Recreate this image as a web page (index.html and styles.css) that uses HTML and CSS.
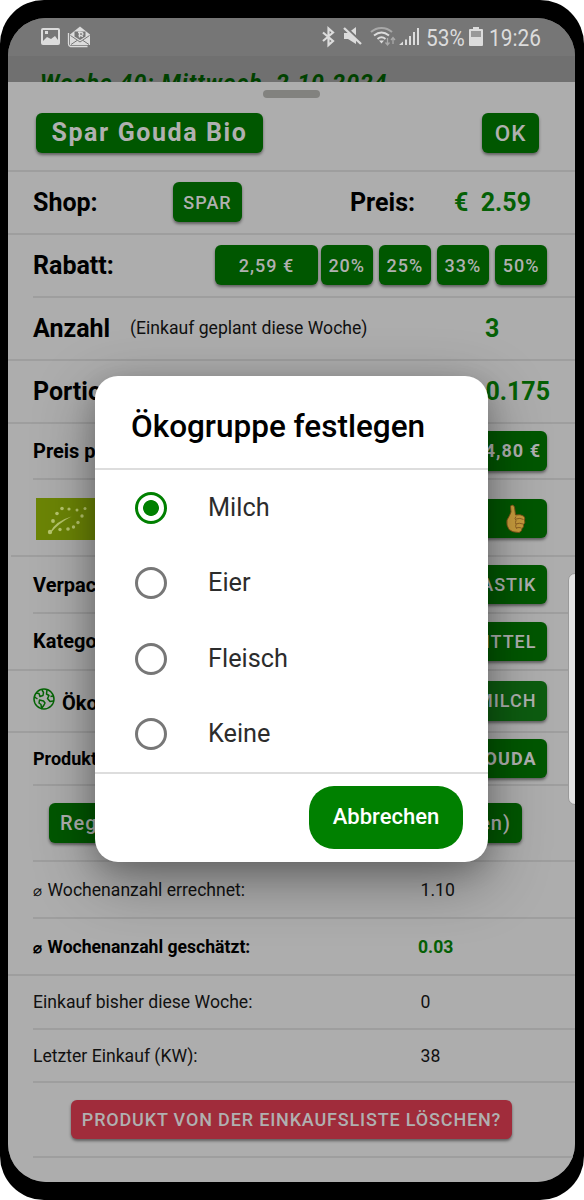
FILE: index.html
```html
<!DOCTYPE html>
<html lang="de">
<head>
<meta charset="utf-8">
<title>Spar Gouda Bio</title>
<link rel="stylesheet" href="styles.css">
</head>
<body>
<div class="phone">
  <div class="screen">
    <header class="status">
      <svg class="status-left" width="52" height="24" viewBox="0 0 52 24">
        <path fill="#dcdcdc" fill-rule="evenodd" d="M2 2h15q2 0 2 2v13q0 2-2 2H2q-2 0-2-2V4q0-2 2-2zM2 4v11l4-4 4 2 4-3 3 4V4zM4 5h3v3H4z"/>
        <path fill="#dcdcdc" d="M29 8.500l10-8 10 8V19H29z"/>
        <path d="M33.500 5.500h11v5L39 14l-5.500-3.500z" fill="#777"/>
        <path d="M29.500 9.500l9.500 6.500 9.500-6.500M30 18.500l6-4M48 18.500l-6-4" fill="none" stroke="#777" stroke-width="1"/>
        <path d="M37 6.500h3q2 0 2 1.500t-2 1.500h-2.500M39.500 9.500q2 0 2 1.500M38.500 5.500v6" fill="none" stroke="#dcdcdc" stroke-width="1.300"/>
        <path d="M27.500 7v11q0 2 2 2.500h17" fill="none" stroke="#dcdcdc" stroke-width="1.300"/>
      </svg>
      <div class="status-right">
        <svg width="130" height="24" viewBox="0 0 130 24">
          <path d="M2 6.500l10 8.500-4.500 4v-16.500l4.500 4-10 8.500" fill="none" stroke="#dcdcdc" stroke-width="2.200"/>
          <path d="M23 7h4l8-6v17l-8-5h-4z" fill="#dcdcdc"/>
          <path d="M23 0l18 17" stroke="#767676" stroke-width="3"/>
          <path d="M23 2l17 16" stroke="#dcdcdc" stroke-width="2.400"/>
          <path d="M50 6c6-5.500 15-5.500 21 0" fill="none" stroke="#a8a8a8" stroke-width="2"/>
          <path d="M53 9.500c5-4 10-4 15 0M56.500 13c3-2.500 5-2.500 8 0" fill="none" stroke="#dcdcdc" stroke-width="2"/>
          <path d="M58 14.500h5l-2.500 3z" fill="#dcdcdc"/>
          <path d="M66.500 12v7M64.500 16.500l2 2.500 2-2.500M72 18v-6M70 14l2-2.500 2 2.500" fill="none" stroke="#aaa" stroke-width="1.300"/>
          <path d="M78 19l4-3.500v3.500zM84 13.500h2V19h-2zM88 10h2v9h-2zM92 6h2v13h-2zM96 2h2v17h-2z" fill="#dcdcdc"/>
        </svg>
        <span class="status-text percent">53%</span>
        <svg class="battery" width="14" height="20" viewBox="0 0 14 20">
          <path d="M4 0h6v2h3q1 0 1 1v15q0 1-1 1H1q-1 0-1-1V3q0-1 1-1h3z" fill="#dcdcdc"/>
          <path d="M2 4h10v6H2z" fill="#999"/>
        </svg>
        <span class="status-text time">19:26</span>
      </div>
    </header>
    <div class="week">Woche 40: Mittwoch, 2.10.2024</div>
    <main class="sheet">
      <div class="handle"></div>
      <div class="row full title-row"><span class="btn name">Spar Gouda Bio</span><span class="btn ok">OK</span></div>
      <div class="row full shop-row"><b>Shop:</b><span class="btn spar">SPAR</span><b>Preis:</b><b class="green">€&nbsp; 2.59</b></div>
      <div class="row rabatt-row"><b>Rabatt:</b><span class="btn price">2,59 €</span><span class="btn pct">20%</span><span class="btn pct">25%</span><span class="btn pct">33%</span><span class="btn pct">50%</span></div>
      <div class="row full anzahl-row"><b>Anzahl</b><span class="note">(Einkauf geplant diese Woche)</span><b class="green">3</b></div>
      <div class="row full portion-row split"><b>Portionen:</b><b class="green">0.175</b></div>
      <div class="row preis-row small split"><b>Preis pro kg:</b><span class="btn wide bold unit">14,80 €</span></div>
      <div class="row nearly eco-row split">
        <svg width="63" height="42" viewBox="0 0 63 42">
          <path fill="#6c8506" d="M0 0h63v42H0z"/>
          <g fill="#b7c66d"><circle cx="14" cy="34" r="2.200"/><circle cx="17" cy="23" r="1.900"/><circle cx="21" cy="15.500" r="1.800"/><circle cx="26" cy="10.500" r="1.800"/><circle cx="33" cy="11" r="1.600"/><circle cx="41" cy="12" r="1.500"/><circle cx="49" cy="10.500" r="1.500"/><circle cx="46" cy="18" r="1.700"/><circle cx="42" cy="24.500" r="1.700"/><circle cx="37.500" cy="29" r="1.700"/><circle cx="32" cy="31" r="1.800"/><circle cx="24" cy="31.500" r="1.700"/></g>
          <path d="M13.500 35Q19 23 35.500 18.500Q23 25 15.500 34z" fill="#b7c66d"/>
        </svg>
        <span class="btn wide thumb">
          <svg width="20" height="30" viewBox="0 0 20 30"><path d="M1 16Q4 11 5 8L4.500 2Q7-.5 8.500 3l1 8q5-1 8 1 2 2 1 4 1 3-1 4.500.5 3-1.500 4 0 3-3 4-7 0-10-3-3-4-2-9.500z" fill="#c89c3d" stroke="#7d4d16" stroke-width=".9"/><path d="M10 15q4-1.500 7.500.5M10 20q3-1.500 7 0M10 24q3-1 5.500 0M10 12.500q-2 2 0 4-1 2 0 4-1 2 .5 4" fill="none" stroke="#8e6023" stroke-width="1"/></svg>
        </span>
      </div>
      <div class="row verp-row small split"><b>Verpackung:</b><span class="btn wide">PLASTIK</span></div>
      <div class="row full kat-row small split"><b>Kategorie:</b><span class="btn wide">LEBENSMITTEL</span></div>
      <div class="row full oeko-row small split">
        <span class="oeko"><svg width="22" height="22" viewBox="0 0 22 22"><g fill="none" stroke="#056505" stroke-width="1.500" stroke-linejoin="round"><circle cx="11" cy="11" r="10"/><path d="M3 5l3 .5 1 3 3-1 .5-3L9 2M1.500 9l3 2M6.500 12l4 1 1.500 2-1 2-2.500 3.500-.5-4-2-1.500zM14 2l-.5 4 2.500 1.500-1.500 3 2.500 3 3-.5M20 8l-2.500 .5"/></g></svg><b>Ökogruppe:</b></span>
        <span class="btn wide light">MILCH</span>
      </div>
      <div class="row produkt-row split"><b>Produktgruppe:</b><span class="btn wide bold">GOUDA</span></div>
      <div class="row regel-row"><span class="btn regel"><span>Regelmäßig</span><span>(anlegen)</span></span></div>
      <div class="row stat s1"><span><i>⌀</i>Wochenanzahl errechnet:</span><span>1.10</span></div>
      <div class="row full stat s2"><b><i>⌀</i>Wochenanzahl geschätzt:</b><b class="green">0.03</b></div>
      <div class="row stat s3"><span>Einkauf bisher diese Woche:</span><span>0</span></div>
      <div class="row stat s4"><span>Letzter Einkauf (KW):</span><span>38</span></div>
      <div class="row delete-row"><span class="btn delete">PRODUKT VON DER EINKAUFSLISTE LÖSCHEN?</span></div>
    </main>
    <div class="edge"></div>
    <section class="dialog">
      <h1>Ökogruppe festlegen</h1>
      <div class="options">
        <div class="option"><span class="radio on"></span>Milch</div>
        <div class="option"><span class="radio"></span>Eier</div>
        <div class="option"><span class="radio"></span>Fleisch</div>
        <div class="option"><span class="radio"></span>Keine</div>
      </div>
      <footer><span class="cancel">Abbrechen</span></footer>
    </section>
  </div>
</div>
</body>
</html>
```
FILE: styles.css
```css
* { box-sizing: border-box; }
body { margin: 0; background: #fff; font-family: Roboto, sans-serif; }
.phone { width: 584px; height: 1200px; padding: 17.500px 9px 18.500px 8px; background: #000; border-radius: 44px; }
.screen { position: relative; height: 1164px; overflow: hidden; border-radius: 38px; background: #707070; }
.status { height: 38px; padding: 8px 35px 0 33px; display: flex; justify-content: space-between; background: #767676; color: #dcdcdc; }
.status-right { display: flex; width: 219px; }
.status-right > svg:first-child { width: 130px; margin-right: -27px; flex: none; }
.status-text { font-size: 24.500px; line-height: 24px; transform: scaleX(.85); transform-origin: left; white-space: nowrap; flex: none; }
.percent { width: 43px; margin-left: 1.500px; }
.battery { flex: none; margin: 1.500px 6px 0 .5px; }
.time { width: 52px; }
.week { height: 26.500px; padding: 14px 0 0 32px; overflow: hidden; color: #004200; font-size: 23px; line-height: 27px; font-weight: 700; font-style: italic; letter-spacing: 1px; white-space: nowrap; }
.sheet { height: 1100px; background: #adadad; color: #000; display: flow-root; }
.handle { width: 57px; height: 8px; margin: 8px 0 0 255px; border-radius: 4px; background: #82827f; }
.row { display: flex; align-items: center; margin-left: 25px; padding-right: 28px; border-bottom: 2px solid #9e9e9e; font-size: 25px; white-space: nowrap; }
.row b { font-weight: 700; }
.row.full { margin-left: 0; padding-left: 25px; }
.row.nearly { margin-left: 3px; padding-left: 25px; padding-top: 2px; }
.split { justify-content: space-between; }
.small { font-size: 20px; }
.green { color: #056005; }
.btn { display: flex; align-items: center; justify-content: center; height: 39.500px; border-radius: 6px; background: #005700; color: #b0b0b0; font-size: 18px; font-weight: 500; letter-spacing: 1px; box-shadow: 0 2px 3px rgba(0,0,0,.45); }
.title-row { height: 73.500px; padding-bottom: 2px; justify-content: space-between; }
.name { width: 227px; margin-left: 3px; font-size: 25px; font-weight: 700; letter-spacing: 1.600px; }
.ok { width: 57px; margin-right: 8px; font-size: 22.500px; }
.shop-row { height: 63px; display: grid; grid-template-columns: 140px 177px 104px 1fr; }
.spar { width: 69px; }
.rabatt-row { height: 63px; }
.rabatt-row b { width: 182px; }
.price { width: 103px; margin-right: 3px; }
.pct { width: 51.500px; margin-right: 6.600px; flex: none; }
.pct:last-child { margin-right: 0; }
.anzahl-row { height: 63px; display: grid; grid-template-columns: 97px 355px 1fr; }
.note { font-size: 17.600px; color: #111; }
.portion-row { height: 63px; }
.portion-row .green { margin-right: -3px; }
.preis-row { height: 56.500px; }
.verp-row { height: 57px; }
.kat-row { height: 56.500px; }
.wide { width: 170px; padding-right: 10.500px; justify-content: flex-end; }
.bold { font-weight: 700; }
.unit { padding-right: 6px; }
.eco-row { height: 77px; }
.thumb { padding-right: 21px; }
.oeko-row { height: 62.500px; }
.oeko { display: flex; gap: 7px; align-items: center; padding-top: 5px; }
.oeko svg { margin-bottom: 9px; }
.light { background: #0d5c10; }
.produkt-row { height: 53px; font-size: 18px; }
.regel-row { height: 75.500px; }
.regel { width: 473px; margin-left: 16px; padding: 0 11px; justify-content: space-between; font-size: 20px; }
.stat { display: grid; grid-template-columns: 387.500px 1fr; padding-top: 1px; font-size: 17.600px; color: #111; }
.stat.full { grid-template-columns: 385px 1fr; }
.stat i { display: inline-block; width: 14.500px; font-style: normal; font-size: 14.500px; line-height: 1; }
.stat b { color: #000; }
.stat .green { color: #056005; }
.s1 { height: 57.500px; }
.s2 { height: 56.500px; }
.s3 { height: 54px; }
.s4 { height: 53px; }
.delete-row { height: 75.500px; }
.delete { width: 441px; margin-left: 38px; background: #a02c3b; font-size: 18px; letter-spacing: .83px; }
.edge { position: absolute; right: -7px; top: 555px; width: 14px; height: 232px; border: 1px solid #999; border-radius: 7px; background: #e2e2e2; }
.dialog { position: absolute; left: 87px; top: 358px; width: 393px; height: 486px; border-radius: 23px; background: #fff; box-shadow: 0 18px 60px rgba(0,0,0,.38), 0 8px 24px rgba(0,0,0,.15); }
.dialog h1 { margin: 0; height: 94px; padding: 5px 0 0 36px; border-bottom: 2px solid #ddd; font-size: 31.500px; line-height: 92px; font-weight: 500; white-space: nowrap; }
.options { height: 302px; padding-top: .5px; }
.option { height: 75.500px; padding-left: 40px; display: flex; align-items: center; gap: 41px; color: #2c2c2c; font-size: 25.300px; line-height: 32px; }
.radio { width: 32px; height: 32px; border: 3px solid #777; border-radius: 50%; }
.radio.on { border-color: #008000; background: radial-gradient(circle, #008000 7.500px, #fff 8.300px); }
.dialog footer { display: flex; justify-content: flex-end; height: 90px; padding: 12px 25px 0 0; border-top: 2px solid #ddd; }
.cancel { width: 154px; height: 63px; border-radius: 25px; background: #008000; color: #fff; font-size: 22px; font-weight: 500; line-height: 61px; text-align: center; }
```
